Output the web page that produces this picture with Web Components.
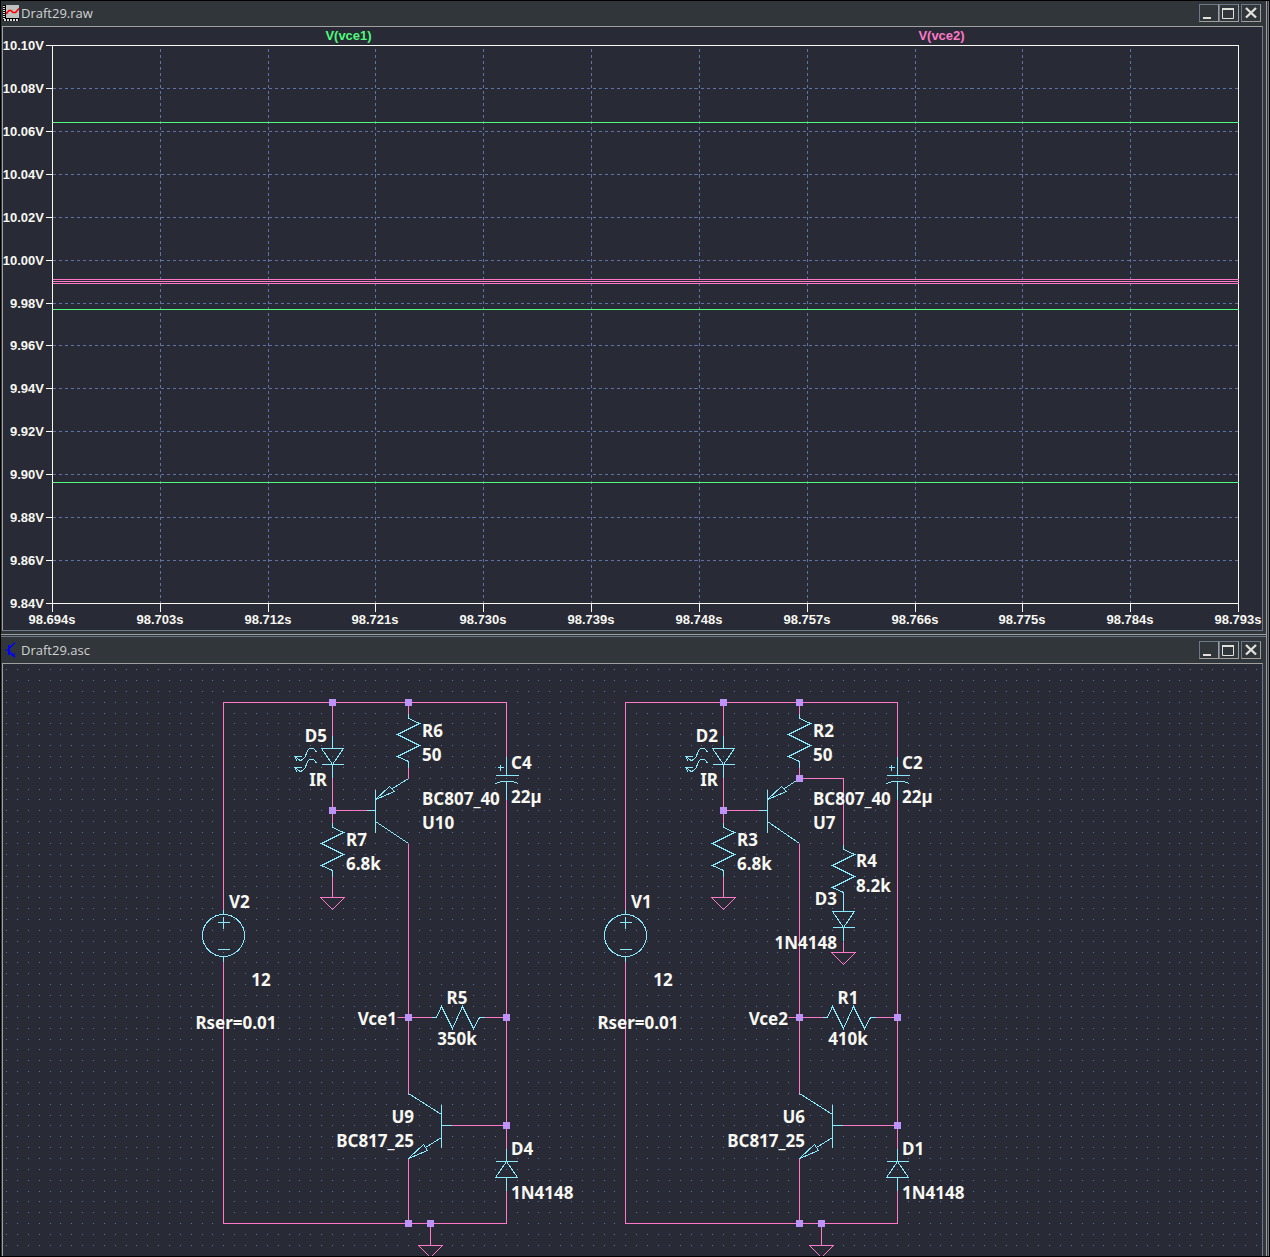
<!DOCTYPE html>
<html lang="en">
<head>
<meta charset="utf-8">
<title>Draft29</title>
<style>
  :root {
    --chrome: #31363a;
    --edge-light: #a0a0a0;
    --edge-dark: #6f7888;
    --canvas: #282a36;
    --ink: #f8f8f2;
    --grid: #6272a4;
    --wire: #ff79c6;
    --symbol: #8be9fd;
    --node: #bd93f9;
    --green: #50fa7b;
  }
  body { margin: 0; background: #000; }
</style>
</head>
<body>
<mdi-desktop>
  <mdi-window caption="Draft29.raw" icon="plot" style="flex: 633 1 0">
    <wave-plot></wave-plot>
  </mdi-window>
  <mdi-window caption="Draft29.asc" icon="schematic" class="stacked" style="flex: 622 1 0">
    <circuit-schematic></circuit-schematic>
  </mdi-window>
</mdi-desktop>

<script>
class MdiDesktop extends HTMLElement {
  constructor() {
    super();
    this.attachShadow({ mode: 'open' }).innerHTML = `
      <style>
        :host { display: block; box-sizing: border-box; height: 100vh; padding: 1px; background: #000; }
        main { display: flex; flex-direction: column; box-sizing: border-box; height: 100%;
               background: var(--chrome); padding-right: 1px; border-right: 1px solid var(--edge-dark); }
      </style>
      <main><slot></slot></main>`;
  }
}

const ICONS = {
  plot: `<svg width="16" height="16" viewBox="0 0 16 16" shape-rendering="crispEdges" aria-hidden="true">
      <rect width="16" height="16" fill="#000"/>
      <rect x="3" width="13" height="13" fill="#c0c0c0"/>
      <path d="M1 1v13" stroke="#d8d8d8" stroke-width="2" stroke-dasharray="1 1"/>
      <path d="M1 15h15" stroke="#d8d8d8" stroke-width="2" stroke-dasharray="2 1"/>
      <path d="M3 9L6 5.500H8L10 7.500H12.500L16 3.500" fill="none" stroke="#f00" stroke-width="1.600" shape-rendering="auto"/>
    </svg>`,
  schematic: `<svg width="16" height="16" viewBox="0 0 16 16" aria-hidden="true" fill="none" stroke="#00f">
      <path d="M2 8h4"/><path d="M6 3v10" stroke-width="2"/>
      <path d="M6.500 6L12 .5M6.500 9.500L12 15.500M8 13h3.500M11 11v4" stroke-width="1.300"/>
    </svg>`
};

class MdiWindow extends HTMLElement {
  constructor() {
    super();
    this.attachShadow({ mode: 'open' }).innerHTML = `
      <style>
        :host { display: flex; flex-direction: column; box-sizing: border-box; min-height: 0;
                padding-bottom: 3px; border-right: 1px solid var(--edge-light); background: var(--chrome); }
        :host(.stacked) { border-top: 1px solid var(--edge-light); padding-top: 1px; padding-bottom: 0; }
        header { display: flex; align-items: flex-start; height: 25px; box-sizing: border-box; padding: 3px 5px 0 2px; }
        :host(.stacked) header { height: 27px; padding-top: 4px; border-top: 1px solid var(--edge-dark); }
        .icon { display: flex; padding-top: 1px; }
        h1 { flex: 1; margin: 0 0 0 2px; font: 400 13px/18px "Open Sans", "Noto Sans", sans-serif; color: #d0d2d3; }
        .buttons { display: flex; }
        button { display: flex; padding: 0; width: 20px; height: 18px; background: none; border-radius: 0; border: 1px solid;
                 border-color: var(--edge-dark) var(--edge-light) var(--edge-light) var(--edge-dark); }
        button:last-child { margin-left: 2px; }
        .view { flex: 1; display: flex; min-height: 0; overflow: hidden; margin: 0 3px 0 1px; background: var(--canvas); border: 1px solid;
                border-color: var(--edge-light) var(--edge-dark) var(--edge-dark) var(--edge-light); }
        :host(.stacked) .view { border-bottom: 0; }
      </style>
      <header>
        <span class="icon"></span>
        <h1></h1>
        <div class="buttons">
          <button aria-label="Minimize"><svg width="18" height="16" fill="#e0e0dc"><path d="M3 12h8v2H3z"/></svg></button>
          <button aria-label="Maximize"><svg width="18" height="16" fill="none" stroke="#e0e0dc"><path d="M2.500 4v9.500h11V4"/><path d="M2 4h12" stroke-width="2"/></svg></button>
          <button aria-label="Close"><svg width="18" height="16" fill="none" stroke="#e0e0dc" stroke-width="2.400"><path d="M4 3L14 12.500M14 3L4 12.500"/></svg></button>
        </div>
      </header>
      <div class="view"><slot></slot></div>`;
  }
  connectedCallback() {
    this.shadowRoot.querySelector('h1').textContent = this.getAttribute('caption');
    this.shadowRoot.querySelector('.icon').innerHTML = ICONS[this.getAttribute('icon')];
  }
}

/* Base for the two canvases: redraws the SVG whenever the pane changes size. */
class SvgPane extends HTMLElement {
  constructor() {
    super();
    this.attachShadow({ mode: 'open' }).innerHTML = `
      <style>
        :host { display: block; flex: 1; min-width: 0; overflow: hidden; }
        svg { display: block; width: 100%; height: 100%; }
        .lines { fill: none; shape-rendering: crispEdges; }
        text { fill: var(--ink); }
        ${this.constructor.styles}
      </style>
      <svg role="img"></svg>`;
    this.svg = this.shadowRoot.querySelector('svg');
  }
  connectedCallback() {
    this.redraw();
    new ResizeObserver(() => this.redraw()).observe(this);
  }
  redraw() { this.svg.innerHTML = this.draw(this.clientWidth, this.clientHeight); }
}

class WavePlot extends SvgPane {
  static styles = `
    text { font: bold 13px "Liberation Sans", Arial, sans-serif; }
    .grid { stroke: var(--grid); stroke-dasharray: 3 3; }
    .frame { stroke: var(--ink); }
  `;
  draw(w, h) {
    const left = 49, top = 18, right = w - 24, bottom = h - 27;
    const y = v => Math.round(top + (10.1 - v) / 0.26 * (bottom - top));
    const x = i => Math.round(left + i / 11 * (right - left));
    let grid = '', frame = `M${left} ${top}H${right}V${bottom}H${left}Z`, labels = '';
    for (let i = 0; i <= 11; i++) {
      if (i > 0 && i < 11) grid += `M${x(i)} ${bottom}V${top + 3}`;
      frame += `M${x(i)} ${bottom}v8`;
      labels += `<text x="${x(i)}" y="${bottom + 21}" text-anchor="middle">${(98.694 + i * 0.009).toFixed(3)}s</text>`;
    }
    for (let i = 0; i <= 13; i++) {
      const v = 10.1 - i * 0.02, py = y(v);
      if (i > 0 && i < 13) grid += `M${left} ${py}H${right}`;
      frame += `M${left - 7} ${py}h7`;
      labels += `<text x="${left - 8}" y="${py + 5}" text-anchor="end">${v.toFixed(2)}V</text>`;
    }
    const trace = (values, colour) => `<path stroke="${colour}" d="${values.map(v => `M${left} ${y(v)}H${right}`).join('')}"/>`;
    const quarter = (right - left) / 4;
    return `
      <g class="lines" transform="translate(.5 .5)">
        <path class="grid" d="${grid}"/>
        <path class="frame" d="${frame}"/>
        ${trace([10.0642, 9.977, 9.8964], 'var(--green)')}
        ${trace([9.991, 9.990, 9.989], 'var(--wire)')}
      </g>
      ${labels}
      <text x="${left + quarter}" y="13" text-anchor="middle" style="fill:var(--green)">V(vce1)</text>
      <text x="${left + quarter * 3}" y="13" text-anchor="middle" style="fill:var(--wire)">V(vce2)</text>`;
  }
}

/* Symbols return path data for a part whose anchor pin is at (x, y). */
const SYM = {
  resistor: (x, y) => `M${x} ${y}v5l11 5l-22 11l22 11l-22 11l11 5v6`,
  resistorH: (x, y) => `M${x} ${y}h5l5 -11l11 22l10 -22l11 22l6 -11h5`,
  diode: (x, y) => `M${x} ${y}v13M${x - 11} ${y + 13}h22l-11 16zM${x - 11} ${y + 29}h22M${x} ${y + 29}v13`,
  diodeUp: (x, y) => `M${x} ${y}v13M${x - 11} ${y + 13}h22M${x} ${y + 13}l11 16h-22zM${x} ${y + 29}v13`,
  light: (x, y) => [0, 11].map(d => `M${x} ${y + d}c-1 -3 -3 -4 -5 -4c-6 0 -4 6 -7 9c-2 3 -5 4 -7 1M${x - 22} ${y + d + 4}h7M${x - 22} ${y + d + 4}l3 5M${x - 22} ${y + d + 4}l6 4`).join(''),
  cap: (x, y) => `M${x} ${y}v19M${x - 11} ${y + 19}h23M${x - 11} ${y + 27}q11 -5 23 0M${x} ${y + 24}v19M${x - 9} ${y + 11}h6M${x - 6} ${y + 8}v6`,
  source: (x, y) => `M${x} ${y}v5M${x} ${y + 47}v5M${x - 6} ${y + 13}h12M${x} ${y + 7}v12M${x - 6} ${y + 40}h12M${x - 21} ${y + 26}a21 21 0 1 0 42 0a21 21 0 1 0 -42 0`,
  pnp: (x, y, e) => `M${x - 9} ${y}h9M${x} ${y - 21}v43M${x} ${y - 11}l14 -13l5 5zM${x + 17} ${y - 22}L${e} ${y - 32}M${x} ${y + 11}L${e} ${y + 33}`,
  npn: (x, y, e) => `M${x + 10} ${y}h-10M${x} ${y - 21}v43M${x} ${y - 11}L${e} ${y - 32}M${x} ${y + 12}L${e + 17} ${y + 22}M${e} ${y + 33}l15 -14l4 6z`,
  ground: (x, y) => `M${x - 12} ${y}h24l-12 12z`
};

class CircuitSchematic extends SvgPane {
  static styles = `
    text { font: bold 17px "Noto Sans", "Open Sans", sans-serif; }
    .dots { stroke: var(--grid); }
    .wire { stroke: var(--wire); }
    .symbol { stroke: var(--symbol); }
    .nodes { fill: var(--node); shape-rendering: crispEdges; }
  `;
  /* One copy of the circuit; dx shifts it, src is the x of its voltage source. */
  circuit(dx, src, bar, n) {
    const a = 329 + dx, b = 405 + dx, c = 503 + dx;
    let wire = `M${src} 245V38H${c}V93M${src} 297V559H${c}V526M${c} 135V484M${a} 38V71M${a} 113V159M${a} 146H${bar - 9}M${a} 211V233
      M${b} 38V50M${b} 102V114M${b} 179V430M${b - 11} 353H${b + 23}M${b + 75} 353H${c}M${bar + 75} 461H${c}M${b} 494V559M${b + 22} 559V581`;
    wire += SYM.ground(a, 233) + SYM.ground(b + 22, 581);
    let symbol = SYM.source(src, 245) + SYM.diode(a, 71) + SYM.light(a - 16, 88) + SYM.resistor(b, 49) + SYM.resistor(a, 158)
      + SYM.cap(c, 92) + SYM.pnp(bar, 146, b) + SYM.resistorH(b + 23, 353) + SYM.npn(b + 33, 461, b) + SYM.diodeUp(c, 484);
    const nodes = [[a, 38], [b, 38], [a, 146], [b, 353], [c, 353], [c, 461], [b, 559], [b + 22, 559]];
    const texts = [
      [n.led, a - 5, 78, 'end'], ['IR', a - 5, 122, 'end'],
      [n.re, b + 14, 73], ['50', b + 14, 97], ['BC807_40', b + 14, 141], [n.pnp, b + 14, 165],
      [n.rb, a + 14, 182], ['6.8k', a + 14, 206], [n.cap, c + 5, 105], ['22µ', c + 5, 139],
      [n.src, src + 6, 244], ['12', src + 38, 322, 'middle'], ['Rser=0.01', src + 13, 365, 'middle'],
      [n.net, b - 11, 361, 'end'], [n.rc, b + 49, 340, 'middle'], [n.rcv, b + 49, 381, 'middle'],
      [n.npn, b + 6, 459, 'end'], ['BC817_25', b + 6, 483, 'end'], [n.d, c + 5, 491], ['1N4148', c + 5, 535]
    ];
    if (n.extra) {
      const e = b + 44;
      wire += `M${b} 114H${e}V180M${e} 277V288` + SYM.ground(e, 288);
      symbol += SYM.resistor(e, 180) + SYM.diode(e, 234);
      nodes.push([b, 114]);
      texts.push(['R4', e + 13, 203], ['8.2k', e + 13, 228], ['D3', e - 6, 241, 'end'], ['1N4148', e - 6, 285, 'end']);
    }
    return `
      <g class="lines" transform="translate(.5 .5)"><path class="wire" d="${wire}"/><path class="symbol" d="${symbol}"/></g>
      <path class="nodes" d="${nodes.map(([x, y]) => `M${x - 3} ${y - 3}h7v7h-7z`).join('')}"/>
      ${texts.map(([t, x, y, anchor = 'start']) => `<text x="${x}" y="${y}" text-anchor="${anchor}">${t}</text>`).join('')}`;
  }
  draw(w, h) {
    const step = 10.865;
    let dots = '';
    for (let y = 5.6; y < h; y += step)
      for (let x = 3.55; x < w - 4; x += step) dots += `M${Math.floor(x)} ${Math.floor(y) + 0.5}h1`;
    return `<path class="lines dots" d="${dots}"/>`
      + this.circuit(0, 220, 372, { led: 'D5', re: 'R6', pnp: 'U10', rb: 'R7', cap: 'C4', src: 'V2', net: 'Vce1', rc: 'R5', rcv: '350k', npn: 'U9', d: 'D4' })
      + this.circuit(391, 622, 764, { led: 'D2', re: 'R2', pnp: 'U7', rb: 'R3', cap: 'C2', src: 'V1', net: 'Vce2', rc: 'R1', rcv: '410k', npn: 'U6', d: 'D1', extra: true });
  }
}

customElements.define('mdi-desktop', MdiDesktop);
customElements.define('mdi-window', MdiWindow);
customElements.define('wave-plot', WavePlot);
customElements.define('circuit-schematic', CircuitSchematic);
</script>
</body>
</html>
